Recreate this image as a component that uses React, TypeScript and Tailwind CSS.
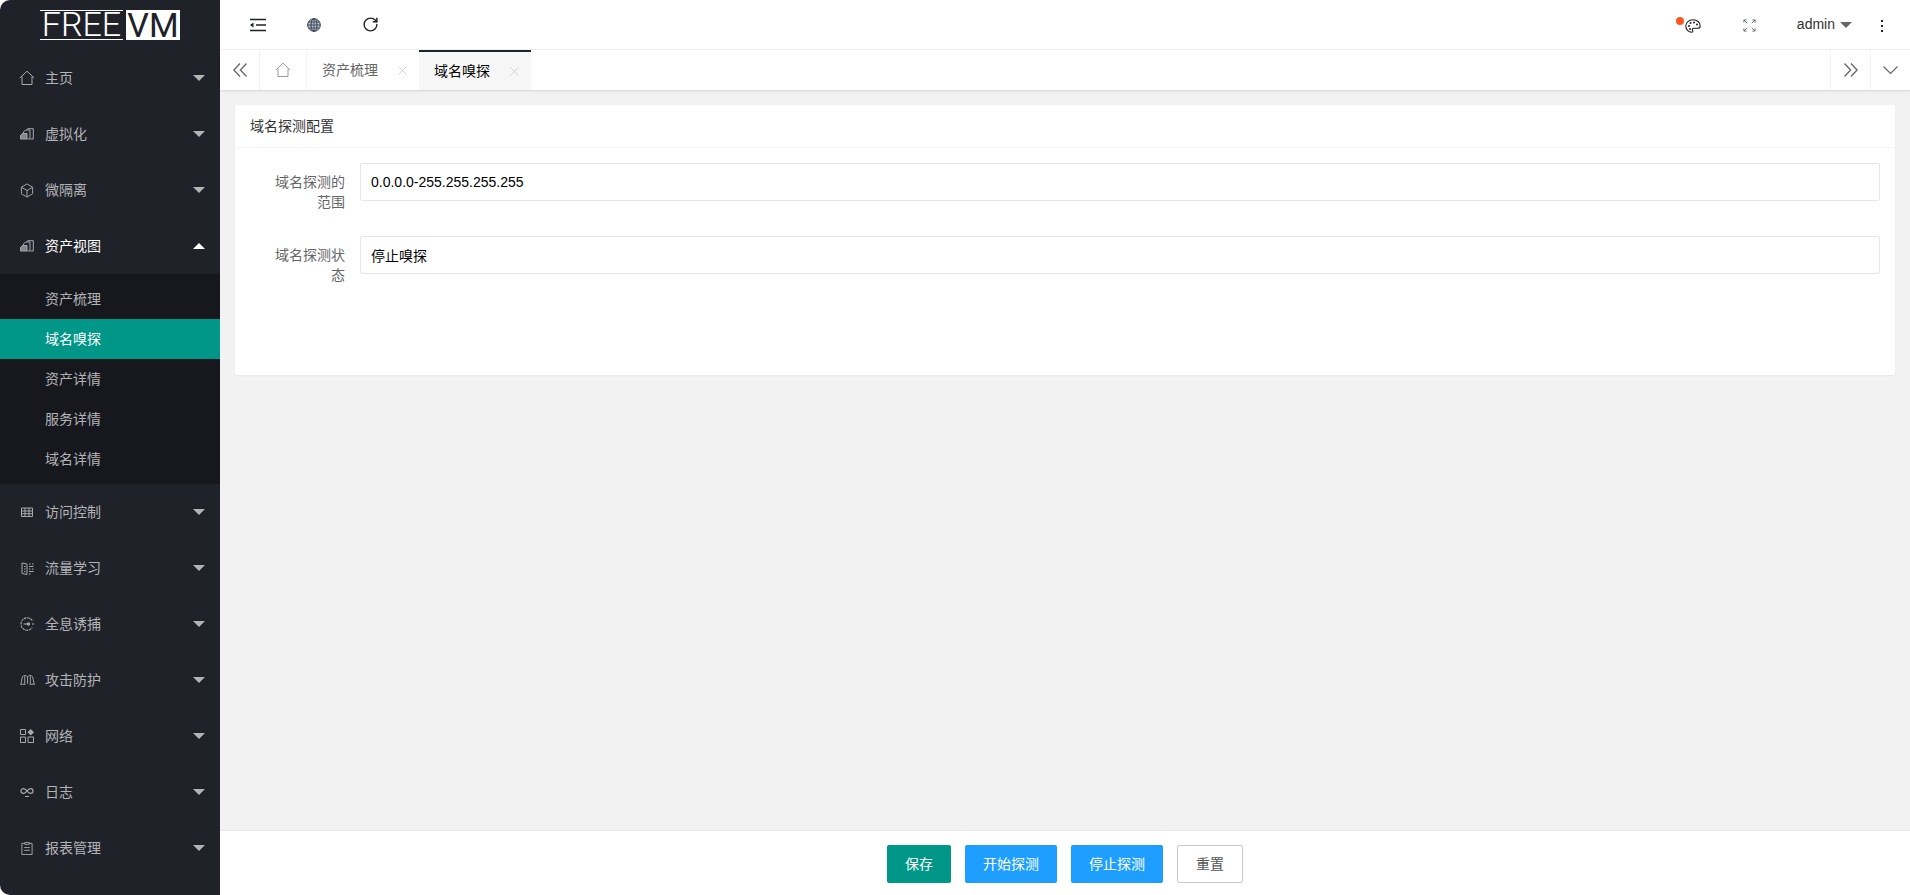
import React from "react";
import { RotateCw, X } from "lucide-react";

const font = "font-['Liberation_Sans','Noto_Sans_CJK_SC',sans-serif]";

const IconHome = () => (
  <svg viewBox="0 0 16 16" className="w-[16px] h-[16px]" fill="none" stroke="currentColor" strokeWidth="1">
    <path d="M.8 8 8 1.200 15.200 8M3 6.500v8h10v-8" />
  </svg>
);
const IconBlocks = () => (
  <svg viewBox="0 0 14 12" className="w-[14px] h-[12px]" fill="none" stroke="currentColor" strokeWidth="1">
    <path d="M2.500 5.500h4.500v5.500H.5V7.500z" fill="currentColor" fillOpacity=".75" />
    <path d="M3.500 5V4l2-2h4.500v9H7.500" />
    <path d="M7 2V1.500L8 .7h5.300V11H10.500" />
  </svg>
);
const IconCube = () => (
  <svg viewBox="0 0 14 16" className="w-[14px] h-[15px]" fill="none" stroke="currentColor" strokeWidth="1">
    <path d="M7 1 13 4.500v7L7 15 1 11.500v-7zM1 4.500 7 8l6-3.500M7 8v7" />
  </svg>
);
const IconTable = () => (
  <svg viewBox="0 0 12 10" className="w-[12px] h-[10px]" fill="none" stroke="currentColor" strokeWidth="1">
    <path d="M.5 1h11v8.500H.5zM.5 4h11M.5 6.700h11M4 1v8.500M8 1v8.500" />
  </svg>
);
const IconFlow = () => (
  <svg viewBox="0 0 13 13" className="w-[13px] h-[13px]" fill="none" stroke="currentColor" strokeWidth="1">
    <path d="M6 2 1 1v10.500L6 12.500V2M3 4.500h1.500M3 7h1.500M3 9.500h1.500M8 2h1.500M11 2h1.500M8 4.500h4.500M8 7h1.500M11 7h1.500M8 9.500h4.500M8 12h1.500" />
  </svg>
);
const IconTrap = () => (
  <svg viewBox="0 0 14 14" className="w-[14px] h-[14px]" fill="none" stroke="currentColor" strokeWidth="1.100">
    <path d="M12.300 3.500A6.200 6.200 0 1 0 12.300 10.500" strokeDasharray="2.600 .7" />
    <path d="M3.500 7h5" />
    <circle cx="8.500" cy="7" r="1.100" fill="currentColor" />
    <path d="M13 6v2" />
  </svg>
);
const IconBook = () => (
  <svg viewBox="0 0 16 12" className="w-[15px] h-[12px]" fill="none" stroke="currentColor" strokeWidth="1">
    <path d="M.8 11 2.500 2.500C4 .8 6.500 .8 8 2.500 9.500 .8 12 .8 13.500 2.500L15.200 11M8 2.500V10M.8 10.500h5.200M10 10.500h5.200M5 2v8M11 2v8" />
  </svg>
);
const IconApps = () => (
  <svg viewBox="0 0 14 14" className="w-[14px] h-[14px]" fill="none" stroke="currentColor" strokeWidth="1">
    <path d="M.5 .5h5v5h-5zM.5 8h5v5.500h-5zM8 8h5.500v5.500H8z" />
    <path d="M10.700 .5 13.500 3.200 10.700 6 8 3.200z" fill="currentColor" />
  </svg>
);
const IconInfinity = () => (
  <svg viewBox="0 0 14 12" className="w-[14px] h-[12px]" fill="none" stroke="currentColor" strokeWidth="1.200">
    <path d="M7 5C5.800 3.300 4.600 2.600 3.400 2.600a2.400 2.400 0 0 0 0 4.800C4.600 7.400 5.800 6.700 7 5c1.200-1.700 2.400-2.400 3.600-2.400a2.400 2.400 0 0 1 0 4.800C9.400 7.400 8.200 6.700 7 5z" />
    <path d="M5 10.500h4" strokeWidth="1" />
  </svg>
);
const IconClipboard = () => (
  <svg viewBox="0 0 12 14" className="w-[12px] h-[13px]" fill="none" stroke="currentColor" strokeWidth="1">
    <path d="M3 1.500H.5v12h11v-12H9M3.500 .5h5v2h-5zM3 6h6M3 9h6" />
  </svg>
);
const IconUnindent = () => (
  <svg viewBox="0 0 16 14" className="w-[16px] h-[14px]" fill="none" stroke="currentColor" strokeWidth="1.500">
    <path d="M0 1.500h16M6 7h10M0 12.500h16" />
    <path d="M3.500 4.500v5L0 7z" fill="currentColor" stroke="none" />
  </svg>
);
const IconGlobe = () => (
  <svg viewBox="0 0 14 14" className="w-[14px] h-[14px]" fill="none" stroke="#2f3a4c" strokeWidth="1">
    <circle cx="7" cy="7" r="6.300" fill="#8a93a6" fillOpacity=".6" />
    <ellipse cx="7" cy="7" rx="3" ry="6.300" />
    <path d="M.7 7h12.600M1.500 4h11M1.500 10h11M7 .7v12.600" strokeWidth=".8" />
  </svg>
);
const IconPalette = () => (
  <svg viewBox="0 0 16 14" className="w-[16px] h-[14px]" fill="none" stroke="#20222a" strokeWidth="1.100">
    <path d="M8 .8C3.800 .8.800 3.500.800 7s2.800 6.200 5.700 6.200c1.500 0 1.500-1.200 1-2-.5-1 .2-1.900 1.300-1.900h3.700c1.600 0 2.700-.9 2.700-2.300C15.200 3.300 12 .8 8 .8z" />
    <circle cx="4" cy="7" r="1" fill="#20222a" stroke="none" />
    <circle cx="5.500" cy="4" r="1" fill="#20222a" stroke="none" />
    <circle cx="9" cy="3.500" r="1" fill="#20222a" stroke="none" />
    <circle cx="12" cy="5.500" r="1" fill="#20222a" stroke="none" />
    <circle cx="5" cy="10" r="1" fill="#20222a" stroke="none" />
  </svg>
);
const IconScreenFull = () => (
  <svg viewBox="0 0 14 14" className="w-[13px] h-[13px]" fill="none" stroke="#5f6b7a" strokeWidth="1">
    <path d="M1 4V1h3M1 1l3.500 3.500M10 1h3v3M13 1 9.500 4.500M1 10v3h3M1 13l3.500-3.500M13 10v3h-3M13 13 9.500 9.500" />
  </svg>
);
const IconDoubleLeft = () => (
  <svg viewBox="0 0 14 14" className="w-[14px] h-[14px]" fill="none" stroke="currentColor" strokeWidth="1.300">
    <path d="M7 .5.900 7 7 13.500M13.500 .5 7.400 7l6.100 6.500" />
  </svg>
);
const IconDoubleRight = () => (
  <svg viewBox="0 0 14 14" className="w-[14px] h-[14px]" fill="none" stroke="currentColor" strokeWidth="1.300">
    <path d="M.5 .5 6.600 7 .5 13.500M7 .5 13.100 7 7 13.500" />
  </svg>
);
const IconDown = () => (
  <svg viewBox="0 0 15 8" className="w-[15px] h-[8px]" fill="none" stroke="currentColor" strokeWidth="1.100">
    <path d="M.5 .5 7.500 7.500 14.500 .5" />
  </svg>
);

type NavItem = { label: string; icon: React.ReactNode; open?: boolean };

const SUB_ITEMS = ["资产梳理", "域名嗅探", "资产详情", "服务详情", "域名详情"];

const NAV: NavItem[] = [
  { label: "主页", icon: <IconHome /> },
  { label: "虚拟化", icon: <IconBlocks /> },
  { label: "微隔离", icon: <IconCube /> },
  { label: "资产视图", icon: <IconBlocks />, open: true },
  { label: "访问控制", icon: <IconTable /> },
  { label: "流量学习", icon: <IconFlow /> },
  { label: "全息诱捕", icon: <IconTrap /> },
  { label: "攻击防护", icon: <IconBook /> },
  { label: "网络", icon: <IconApps /> },
  { label: "日志", icon: <IconInfinity /> },
  { label: "报表管理", icon: <IconClipboard /> },
];

const Sidebar: React.FC = () => {
  return (
    <aside className="w-[220px] shrink-0 bg-[#20222a] flex flex-col rounded-l-[10px]">
      <div className="h-[50px] flex justify-center pt-[10px]">
        <div className="flex h-[30px] items-stretch font-['Roboto',sans-serif]">
          <span className="w-[83px] border-y border-white text-white text-[34px] leading-[27px] font-light text-center whitespace-nowrap">
            FREE
          </span>
          <span className="ml-[3px] w-[54px] bg-white text-[#20222a] text-[34px] leading-[30px] text-center whitespace-nowrap">
            VM
          </span>
        </div>
      </div>
      {NAV.map((item) => (
        <div key={item.label}>
          <div
            className={`h-[56px] flex items-center text-[14px] ${
              item.open ? "text-white" : "text-[#b3b4b7]"
            }`}
          >
            <span className="w-[45px] shrink-0 flex justify-center pl-[9px] text-[#a9aaad]">{item.icon}</span>
            <span className="flex-1">{item.label}</span>
            <span
              className={`mr-[15px] w-0 h-0 border-x-[6px] border-x-transparent ${
                item.open ? "border-b-[6px] border-b-white" : "border-t-[6px] border-t-[#b3b4b7]"
              }`}
            />
          </div>
          {item.open && (
            <div className="bg-[#16181d] py-[5px] text-[14px] text-[#b3b4b7]">
              {SUB_ITEMS.map((sub) => (
                <div
                  key={sub}
                  className={`h-[40px] leading-[40px] pl-[45px] ${
                    sub === "域名嗅探" ? "bg-[#009688] text-white" : ""
                  }`}
                >
                  {sub}
                </div>
              ))}
            </div>
          )}
        </div>
      ))}
    </aside>
  );
};

const Header: React.FC = () => {
  return (
    <header className="h-[50px] shrink-0 flex items-center border-b border-[#f2f2f2] text-[#20222a] rounded-tr-[10px] bg-white">
      <div className="w-[56px] flex justify-center ml-[10px]"><IconUnindent /></div>
      <div className="w-[56px] flex justify-center"><IconGlobe /></div>
      <div className="w-[56px] flex justify-center"><RotateCw size={17} strokeWidth={2} /></div>
      <div className="flex-1" />
      <div className="relative w-[16px] mr-[42px] mt-[2px]">
        <span className="absolute -left-[9px] -top-[2px] w-[8px] h-[8px] rounded-full bg-[#ff5722]" />
        <IconPalette />
      </div>
      <div className="mr-[41px] mt-[2px]"><IconScreenFull /></div>
      <span className="text-[14px] text-[#333]">admin</span>
      <span className="ml-[5px] w-0 h-0 border-x-[6px] border-x-transparent border-t-[6px] border-t-[#666]" />
      <div className="ml-[29px] mr-[27px] flex flex-col gap-[3px] mt-[2px]">
        <span className="w-[2px] h-[2px] bg-[#20222a]" />
        <span className="w-[2px] h-[2px] bg-[#20222a]" />
        <span className="w-[2px] h-[2px] bg-[#20222a]" />
      </div>
    </header>
  );
};

const Tabs: React.FC = () => {
  return (
    <nav className="h-[40px] shrink-0 flex items-stretch bg-white shadow-[0_1px_2px_rgba(0,0,0,0.12)] z-10 text-[14px]">
      <div className="w-[40px] flex items-center justify-center border-r border-[#f2f2f2] text-[#666]">
        <IconDoubleLeft />
      </div>
      <div className="w-[47px] flex items-center justify-center border-r border-[#f2f2f2] text-[#999]">
        <IconHome />
      </div>
      <div className="w-[112px] flex items-center pl-[15px] text-[#666]">
        <span className="flex-1">资产梳理</span>
        <X size={15} strokeWidth={1} className="mr-[9px] text-[#bbb]" />
      </div>
      <div className="w-[112px] flex items-center pl-[15px] bg-[#f6f6f6] text-[#000] border-t-2 border-[#20222a]">
        <span className="flex-1">域名嗅探</span>
        <X size={15} strokeWidth={1} className="mr-[9px] text-[#bbb]" />
      </div>
      <div className="flex-1" />
      <div className="w-[40px] flex items-center justify-center border-l border-[#f2f2f2] text-[#666]">
        <IconDoubleRight />
      </div>
      <div className="w-[40px] flex items-center justify-center border-l border-[#f2f2f2] text-[#666]">
        <IconDown />
      </div>
    </nav>
  );
};

const FormRow: React.FC<{ label: string; value: string }> = ({ label, value }) => {
  return (
    <div className="flex h-[60px] mb-[13px]">
      <label className="w-[125px] shrink-0 pl-[30px] pr-[15px] py-[9px] text-[14px] leading-[20px] text-right text-[#666]">
        {label}
      </label>
      <input
        readOnly
        value={value}
        className="flex-1 h-[38px] border border-[#e6e6e6] rounded-[2px] px-[10px] text-[14px] text-black outline-none bg-white"
      />
    </div>
  );
};

const App: React.FC = () => {
  return (
    <div className={`h-[895px] w-full flex bg-white overflow-hidden ${font}`}>
      <Sidebar />
      <main className="flex-1 min-w-0 flex flex-col">
        <Header />
        <Tabs />
        <div className="flex-1 bg-[#f2f2f2] p-[15px]">
          <section className="h-[270px] bg-white rounded-[2px] shadow-[0_1px_2px_rgba(0,0,0,0.05)]">
            <div className="h-[43px] leading-[42px] px-[15px] text-[14px] text-[#333] border-b border-[#f6f6f6]">
              域名探测配置
            </div>
            <div className="pt-[15px] pr-[15px]">
              <FormRow label="域名探测的范围" value="0.0.0.0-255.255.255.255" />
              <FormRow label="域名探测状态" value="停止嗅探" />
            </div>
          </section>
        </div>
        <footer className="h-[65px] shrink-0 border-t border-[#e6e6e6] bg-white flex justify-center gap-[14px] pt-[14px] text-[14px] text-white">
          <button className="h-[38px] w-[64px] bg-[#009688] rounded-[2px]">保存</button>
          <button className="h-[38px] w-[92px] bg-[#1e9fff] rounded-[2px]">开始探测</button>
          <button className="h-[38px] w-[92px] bg-[#1e9fff] rounded-[2px]">停止探测</button>
          <button className="h-[38px] w-[66px] bg-white border border-[#c9c9c9] text-[#555] rounded-[2px]">重置</button>
        </footer>
      </main>
    </div>
  );
};

export default App;
